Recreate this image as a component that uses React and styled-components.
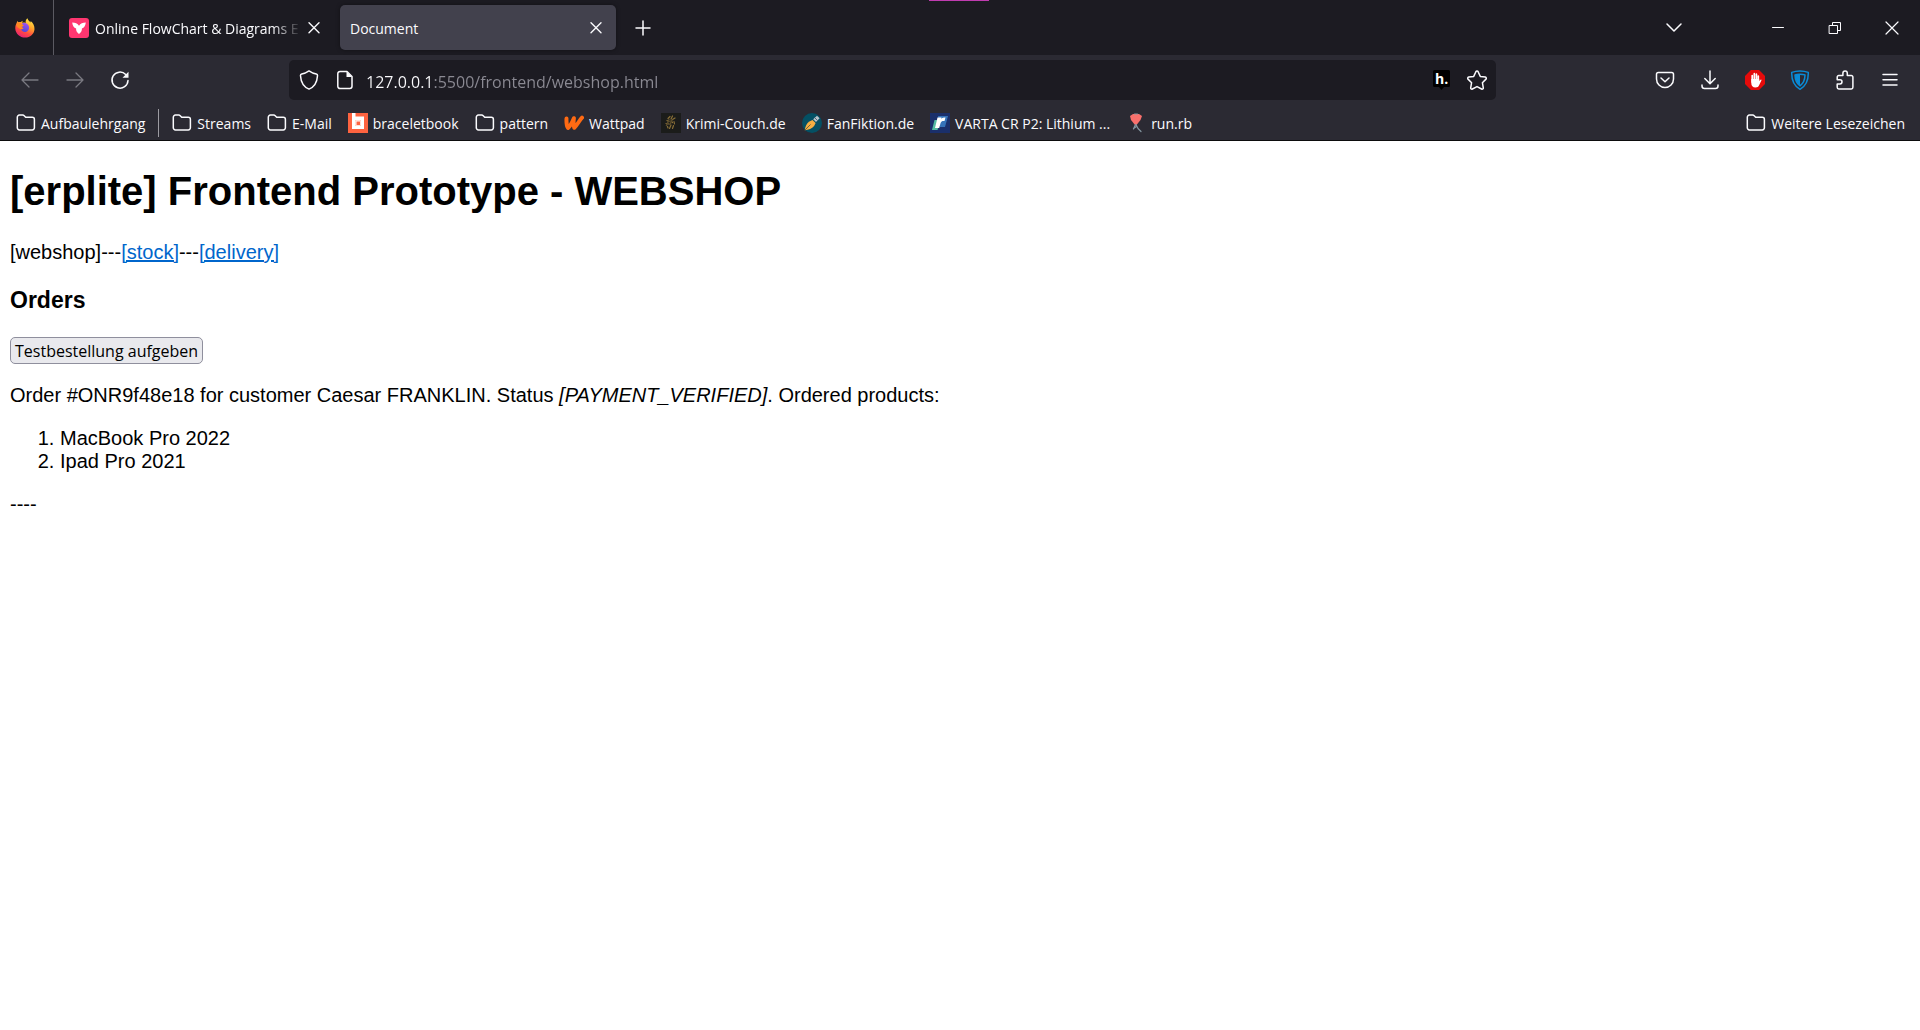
import React from "react";
import styled, { createGlobalStyle, css } from "styled-components";

const uiFont = '"Open Sans", "Noto Sans", sans-serif';
const docFont = '"Liberation Sans", Arial, sans-serif';

const GlobalStyle = createGlobalStyle`
  *, *::before, *::after { box-sizing: border-box; }
  body { margin: 0; background: #fff; }
`;

const Window = styled.div`
  display: flex;
  flex-direction: column;
  min-height: 100vh;
`;

const Chrome = styled.header`
  background: #2b2a33;
  color: #fbfbfe;
  font: 14px/20px ${uiFont};
  border-bottom: 1px solid #0c0c0d;
`;

const SnapMarker = styled.div`
  position: absolute;
  top: 0;
  left: calc(50% - 31px);
  width: 60px;
  height: 1px;
  background: #c03cb0;
`;

const TabStrip = styled.div`
  display: flex;
  align-items: center;
  height: 55px;
  background: #1c1b22;
`;

const FirefoxView = styled.button`
  display: flex;
  align-items: center;
  align-self: stretch;
  width: 54px;
  padding: 0 0 0 15px;
  margin-right: 4px;
  border: 0;
  border-right: 1px solid #5b5a62;
  background: none;
`;

const Tab = styled.div`
  display: flex;
  align-items: center;
  width: 276px;
  height: 45px;
  margin-right: 6px;
  padding: 0 8px 0 ${(p) => (p.$active ? 10 : 11)}px;
  border-radius: 5px;
  ${(p) => p.$active && css`
    background: #42414d;
    box-shadow: 0 0 4px rgba(0, 0, 0, 0.4);
  `}
`;

const TabTitle = styled.span`
  flex: 1;
  min-width: 0;
  padding-top: 2px;
  overflow: hidden;
  white-space: nowrap;
  ${(p) => p.$fade && css`
    margin-left: 6px;
    mask-image: linear-gradient(to left, transparent, #000 30px);
  `}
`;

const IconButton = styled.button`
  display: flex;
  flex: none;
  align-items: center;
  justify-content: center;
  width: ${(p) => p.$width || 45}px;
  height: 40px;
  padding: 0;
  border: 0;
  border-radius: 5px;
  background: none;
  color: ${(p) => (p.$muted ? "#7a7981" : "#fbfbfe")};
`;

const WindowControls = styled.div`
  display: flex;
  margin-left: auto;
`;

const ListTabs = styled.div`
  margin-right: 55px;
`;

const NavBar = styled.nav`
  display: flex;
  align-items: center;
  height: 49px;
  padding: 1px 8px 0 7px;
`;

const Spring = styled.div`
  flex: 0 1 ${(p) => p.$basis || 146}px;
`;

const UrlBar = styled.div`
  display: flex;
  flex: 1;
  align-items: center;
  height: 40px;
  padding: 0 2px;
  border-radius: 5px;
  background: #1c1b22;
`;

const UrlInput = styled.input`
  flex: 1;
  min-width: 0;
  height: 32px;
  margin-left: 4px;
  padding: 3px 0 0;
  border: 0;
  outline: 0;
  font: 16px/28px ${uiFont};
  color: transparent;
  caret-color: #fbfbfe;
  background: linear-gradient(to right, #fbfbfe 66px, #8b8a93 66px);
  background-clip: text;
  -webkit-background-clip: text;
`;

const Bookmarks = styled.div`
  display: flex;
  align-items: center;
  height: 36px;
  padding: 2px 7px 0 8px;
`;

const Bookmark = styled.a`
  display: flex;
  flex: none;
  align-items: center;
  gap: 5px;
  padding: 0 8px;
  color: inherit;
  text-decoration: none;
  white-space: nowrap;
  ${(p) => p.$end && css`
    margin-left: auto;
  `}
`;

const BookmarkLabel = styled.span`
  padding-top: 2px;
`;

const Separator = styled.div`
  width: 1px;
  height: 28px;
  margin: 0 5px;
  background: #9c9ba2;
`;

const Page = styled.main`
  flex: 1;
  padding: 0 10px;
  background: #fff;
  color: #000;
  font: 20px/23px ${docFont};
`;

const Title = styled.h1`
  margin: 27px 0;
  font-size: 40px;
  line-height: 46px;
`;

const Subtitle = styled.h3`
  margin: 23px 0;
  font-size: 23px;
  line-height: 27px;
`;

const Paragraph = styled.p`
  margin: 20px 0;
`;

const DocLink = styled.a`
  color: #0066cc;
`;

const OrderButton = styled.button`
  display: block;
  height: 27px;
  padding: 2px 4px 0;
  border: 1px solid #8f8f9d;
  border-radius: 5px;
  background: #e9e9ed;
  color: #000;
  font: 16px/23px ${uiFont};
`;

const Products = styled.ol`
  margin: 20px 0;
  padding-left: 50px;
`;

const Icon = styled.svg.attrs({
  width: 20,
  height: 20,
  viewBox: "0 0 20 20",
  "aria-hidden": true,
})`
  flex: none;
  fill: none;
  stroke: ${(p) => (p.$solid ? "none" : "currentColor")};
  stroke-width: ${(p) => p.$weight || 1.5};
  stroke-linecap: round;
  stroke-linejoin: ${(p) => (p.$sharp ? "miter" : "round")};
`;

const FirefoxIcon = () => (
  <Icon $solid>
    <defs>
      <linearGradient id="ff-body" x1="0.8" y1="0" x2="0.3" y2="1">
        <stop offset="0" stopColor="#fff04a" />
        <stop offset="0.4" stopColor="#ffa22b" />
        <stop offset="0.7" stopColor="#ff4a41" />
        <stop offset="1" stopColor="#e61e78" />
      </linearGradient>
      <linearGradient id="ff-globe" x1="0.7" y1="0" x2="0.3" y2="1">
        <stop offset="0" stopColor="#a450f0" />
        <stop offset="1" stopColor="#4f46d8" />
      </linearGradient>
    </defs>
    <path fill="url(#ff-body)" d="M12.4.3c.8 2.3 2.1 3 3 4.200.3-.4.3-.9.2-1.400 2.400 1.700 4.100 5 3.900 8.100-.4 4.900-4.400 8.400-9.300 8.400C4.800 19.600.5 15.700.3 10.500.2 8.500.7 6.600 1.700 5.100c0-.9.3-1.500.9-2.100.2.500.5.900.9 1.200.8-.3 1.600-.3 2.300-.1.600-.7 1.300-1.100 2.200-1.300-.5.600-.8 1.200-.8 1.900 1.400-.1 2.400-.2 3.500.2-.3-1.700.3-3.500 1.700-4.600z" />
    <path fill="url(#ff-globe)" d="M7.200 5.400c1.800-.8 4-.4 5.400.9 2.200 2.200 1.900 5.600-.6 7.100-2.500 1.400-5.700.1-6.100-2.600 1 .4 2.200.1 2.800-.7-1.100-.2-1.900-.7-2.300-1.600.7-.2 1.500-.4 2.100-1L6.800 6.600z" />
    <path fill="#ff8a22" d="M1.700 5.500c1.500-1.300 3.500-1.200 4.900.3l2 1.700c-.4.900-1.300 1-2.200 1.200.3 1.100 1 1.300 2 1.500-.8 1.100-2.400 1.300-3.600.6C2.700 9.700 1.300 8 1.700 5.500z" />
  </Icon>
);

const CreatelyIcon = () => (
  <Icon $solid>
    <rect width="20" height="20" rx="3" fill="#ff3670" />
    <path fill="#fff" d="M3.200 4.500c3 0 5.400 1 6.800 3.200 1.400-2.200 3.800-3.200 6.800-3.200-.4 3.400-1.600 5.300-3.900 6.100.2 2-.8 3.900-2.900 5.300-2.100-1.400-3.100-3.300-2.900-5.300-2.300-.8-3.500-2.700-3.900-6.100z" />
  </Icon>
);

const CloseIcon = () => (
  <Icon $weight={1.4}><path d="M5 4.700l10 10M15 4.700l-10 10" /></Icon>
);

const FolderIcon = () => (
  <Icon>
    <path d="M1.300 4.200a2.100 2.100 0 0 1 2.100-2.100h3.300c.6 0 1.100.2 1.500.6l1.500 1.600h6.600a2.100 2.100 0 0 1 2.100 2.100v8.400a2.100 2.100 0 0 1-2.100 2.100H3.400a2.100 2.100 0 0 1-2.100-2.100z" />
  </Icon>
);

const BraceletIcon = () => (
  <Icon $solid>
    <rect width="20" height="20" fill="#fe6340" />
    <path fill="#fff" d="M4 0h3.500v3.500H16V16H4z" />
    <path fill="#ffc3b4" d="M7 7h6v6H7z" />
    <path fill="#fff" d="M7.500 7.500h5v5h-5z" />
    <path fill="#fe6340" d="M8.500 8.500h3.500V12H8.500z" />
  </Icon>
);

const WattpadIcon = () => (
  <Icon>
    <path
      stroke="#ff6a13"
      strokeWidth="4"
      d="M2.500 5.500c-.2 4 .2 7.500 1.500 9.500 2.300-2 4.300-6 5.900-9.800-.5 3.500-.5 7 .4 9.600C13.300 12 15.200 7.500 18 4.700"
    />
  </Icon>
);

const KrimiIcon = () => (
  <Icon>
    <rect width="20" height="20" fill="#1b1c1a" stroke="none" />
    <g stroke="#8a7038" strokeWidth="1.200">
      <path d="M9 3.500l-2 2M11.500 3l-1.500 3M14 5l-2.500 1.500M6 7.500l2 1M10 8l1.500 1.500M13 8.500l.5 2.500M5 10.500l3 .5M10 12l-1.500 3.500M12.500 12.500l-1 3M6.500 13.500l.5 1.500" />
    </g>
    <path d="M8 6.500l-2.500 6M11 7l-2 4.500" stroke="#5a4c2c" strokeWidth="1.500" />
  </Icon>
);

const FanFiktionIcon = () => (
  <Icon $solid>
    <circle cx="10" cy="10" r="10" fill="#045064" />
    <path fill="#f5ae42" d="M2.800 17.300c.3-3.800 1.800-7.300 4.600-8.900l3.100-1.500 3.100 3.100-1.500 3.100c-2.100 2.600-5.600 3.900-9.300 4.200z" />
    <path d="M3 17l5.300-5.300" stroke="#45523f" strokeWidth="0.8" />
    <path fill="#b9c4cb" d="M11.200 6.300l3.800-3.600 2.600 2.600-3.600 3.800z" />
    <path stroke="#526978" strokeWidth="1" d="M13 5l2.500 2.500" />
  </Icon>
);

const ReicheltIcon = () => (
  <Icon $solid>
    <rect width="20" height="20" fill="#1a2f6b" />
    <path fill="#53bba4" d="M4.500 7h6L7.500 17H2z" />
    <path fill="#3572b8" d="M8 3h10l-3 11h-5z" />
    <path fill="#fff" d="M7.500 4.500h4l-.3 1.200c1.200-1 2.600-1.400 4.300-1.200l-1 3.500c-2-.3-3.400.3-3.900 2l-1.400 5H5z" />
  </Icon>
);

const RunIcon = () => (
  <Icon $solid>
    <path fill="#f8706c" d="M4 3l3-2h6l3 2-1.500 4-4 5H9L5 7z" />
    <path stroke="#8396a0" strokeWidth="1.200" d="M8.500 1h3M9.500 11.500l-2 4.500M10 11.500l2 4 3 3M7.500 15.500l3-2" />
  </Icon>
);

const bookmarks = [
  { label: "Streams", Glyph: FolderIcon },
  { label: "E-Mail", Glyph: FolderIcon },
  { label: "braceletbook", Glyph: BraceletIcon },
  { label: "pattern", Glyph: FolderIcon },
  { label: "Wattpad", Glyph: WattpadIcon },
  { label: "Krimi-Couch.de", Glyph: KrimiIcon },
  { label: "FanFiktion.de", Glyph: FanFiktionIcon },
  { label: "VARTA CR P2: Lithium ...", Glyph: ReicheltIcon },
  { label: "run.rb", Glyph: RunIcon },
];

const products = ["MacBook Pro 2022", "Ipad Pro 2021"];

function BookmarkLink({ label, Glyph, end }) {
  return (
    <Bookmark href="#" $end={end}>
      <Glyph />
      <BookmarkLabel>{label}</BookmarkLabel>
    </Bookmark>
  );
}

function Tabs() {
  return (
    <TabStrip>
      <FirefoxView aria-label="Firefox View"><FirefoxIcon /></FirefoxView>
      <Tab>
        <CreatelyIcon />
        <TabTitle $fade>Online FlowChart &amp; Diagrams E</TabTitle>
        <IconButton $width={24} aria-label="Close tab"><CloseIcon /></IconButton>
      </Tab>
      <Tab $active>
        <TabTitle>Document</TabTitle>
        <IconButton $width={24} aria-label="Close tab"><CloseIcon /></IconButton>
      </Tab>
      <IconButton $width={42} aria-label="New tab">
        <Icon><path d="M10 3v14M3 10h14" /></Icon>
      </IconButton>
      <WindowControls>
        <ListTabs>
          <IconButton $width={40} aria-label="List all tabs">
            <Icon><path d="M3 6l7 7 7-7" /></Icon>
          </IconButton>
        </ListTabs>
        <IconButton $width={57} aria-label="Minimise">
          <Icon $weight={1}><path d="M4.500 9.500h11" /></Icon>
        </IconButton>
        <IconButton $width={57} aria-label="Restore">
          <Icon $weight={1} $sharp>
            <path d="M4.500 7.500h8v8h-8zM7.500 7V4.500h8v8H13" />
          </Icon>
        </IconButton>
        <IconButton $width={57} aria-label="Close window">
          <Icon $weight={1.2}><path d="M4 4l12 12M16 4L4 16" /></Icon>
        </IconButton>
      </WindowControls>
    </TabStrip>
  );
}

function Navigation() {
  return (
    <NavBar>
      <IconButton $muted aria-label="Back">
        <Icon $weight={1.3}><path d="M18 10H2M9 3l-7 7 7 7" /></Icon>
      </IconButton>
      <IconButton $muted aria-label="Forward">
        <Icon $weight={1.3}><path d="M2 10h16M11 3l7 7-7 7" /></Icon>
      </IconButton>
      <IconButton aria-label="Reload">
        <Icon>
          <path d="M15.700 4.500A8 8 0 1 0 18 10.500" />
          <path d="M18.500 1.800v6h-6z" fill="currentColor" stroke="none" />
        </Icon>
      </IconButton>
      <Spring $basis={147} />
      <UrlBar>
        <IconButton $width={36} aria-label="Tracking protection">
          <Icon><path d="M10 .9c2.600 1.800 4.900 2.700 7.300 3.200.8.200 1.300.8 1.200 1.600-.4 6.400-3 11.100-8.500 13.400-5.500-2.300-8.100-7-8.500-13.400-.1-.8.4-1.400 1.200-1.600C5.100 3.600 7.400 2.700 10 .9z" /></Icon>
        </IconButton>
        <IconButton $width={35} aria-label="Site information">
          <Icon>
            <path d="M5 1.500h7l5 5v9.800a2.200 2.200 0 0 1-2.200 2.200H5a2.200 2.200 0 0 1-2.200-2.200V3.700A2.200 2.200 0 0 1 5 1.500z" />
            <path d="M11.500 1.500v5.500H17z" fill="currentColor" stroke="none" />
          </Icon>
        </IconButton>
        <UrlInput aria-label="Address" defaultValue="127.0.0.1:5500/frontend/webshop.html" spellCheck={false} />
        <IconButton $width={35} aria-label="Hypothesis">
          <Icon $solid>
            <path fill="#000" d="M2.500 0h14A1.500 1.500 0 0 1 18 1.500v14a1.500 1.500 0 0 1-1.500 1.500H12l-2.500 3L7 17H2.500A1.500 1.500 0 0 1 1 15.500v-14A1.500 1.500 0 0 1 2.500 0z" />
            <text x="3" y="14" fill="#fff" fontFamily={uiFont} fontWeight="700" fontSize="14">h.</text>
          </Icon>
        </IconButton>
        <IconButton $width={35} aria-label="Bookmark this page">
          <Icon><path d="M10 1c.5 0 .9.3 1.100.7l2.200 4.700 5 .7c1 .2 1.400 1.300.7 2l-3.600 3.600.9 5.100c.1 1-.8 1.700-1.700 1.200L10 16.600 5.400 19c-.9.5-1.800-.2-1.700-1.200l.9-5.100L1 9.100c-.7-.7-.3-1.800.7-2l5-.7 2.200-4.700C9.100 1.300 9.500 1 10 1z" /></Icon>
        </IconButton>
      </UrlBar>
      <Spring />
      <IconButton aria-label="Save to Pocket">
        <Icon>
          <path d="M3.300 2.500h13.400c1 0 1.800.8 1.800 1.800V9a8.500 8.500 0 0 1-17 0V4.300c0-1 .8-1.800 1.800-1.800z" />
          <path d="M6 8l4 3.800L14 8" />
        </Icon>
      </IconButton>
      <IconButton aria-label="Downloads">
        <Icon><path d="M10 1v12.500M4.800 8.500l5.200 5.200 5.200-5.200M2 15v1a2.500 2.500 0 0 0 2.500 2.500h11A2.500 2.500 0 0 0 18 16v-1" /></Icon>
      </IconButton>
      <IconButton aria-label="AdBlock">
        <Icon $solid>
          <path fill="#e50b0b" d="M5.900 0h8.200L20 5.900v8.200L14.100 20H5.900L0 14.100V5.900z" />
          <path d="M7.200 12V5.500M9.300 10V3.700M11.400 10V4.200M13.300 11V6" stroke="#fff" strokeWidth="1.700" />
          <path fill="#fff" d="M6.300 9h7.900v2l1.400-1.300c.5-.4 1.100 0 .9.6l-2.400 5c-.6 1.400-1.600 2.200-3.600 2.200-2.800 0-4.200-1.700-4.200-4.500z" />
        </Icon>
      </IconButton>
      <IconButton aria-label="Shield">
        <Icon>
          <g stroke="#0a8bd6">
            <path d="M10 .9c2.800 0 5.700.5 8.300 1.500.2 7.800-2.400 13.600-8.300 16.900C4.100 16 1.500 10.200 1.700 2.400 4.300 1.400 7.200.9 10 .9z" />
            <path d="M10 4.200c1.800 0 3.500.2 5 .7-.1 5-1.700 8.500-5 10.900-3.300-2.400-4.900-5.900-5-10.900 1.500-.5 3.200-.7 5-.7z" />
          </g>
          <path d="M10 4.200v11.600C6.700 13 5.200 9.500 5 5c1.500-.5 3-.8 5-.8z" fill="#0a8bd6" stroke="none" />
        </Icon>
      </IconButton>
      <IconButton aria-label="Extensions">
        <Icon>
          <path d="M3.800 18.900a1.600 1.600 0 0 1-1.600-1.600v-3.400h2.700a2 2 0 0 0 0-4.200H2.200V7.200a1.600 1.600 0 0 1 1.600-1.600h4.100V3.200a2.200 2.200 0 0 1 4.400 0v2.400h4a1.600 1.600 0 0 1 1.600 1.600v10.100a1.600 1.600 0 0 1-1.600 1.600z" />
        </Icon>
      </IconButton>
      <IconButton aria-label="Menu">
        <Icon><path d="M3 4.500h14M3 9.700h14M3 15h14" /></Icon>
      </IconButton>
    </NavBar>
  );
}

export default function App() {
  return (
    <Window>
      <GlobalStyle />
      <Chrome>
        <SnapMarker />
        <Tabs />
        <Navigation />
        <Bookmarks>
          <BookmarkLink label="Aufbaulehrgang" Glyph={FolderIcon} />
          <Separator />
          {bookmarks.map((item) => (
            <BookmarkLink key={item.label} {...item} />
          ))}
          <BookmarkLink label="Weitere Lesezeichen" Glyph={FolderIcon} end />
        </Bookmarks>
      </Chrome>
      <Page>
        <Title>[erplite] Frontend Prototype - WEBSHOP</Title>
        <Paragraph>
          [webshop]---<DocLink href="#">[stock]</DocLink>---<DocLink href="#">[delivery]</DocLink>
        </Paragraph>
        <Subtitle>Orders</Subtitle>
        <OrderButton>Testbestellung aufgeben</OrderButton>
        <Paragraph>
          Order #ONR9f48e18 for customer Caesar FRANKLIN. Status <em>[PAYMENT_VERIFIED]</em>. Ordered products:
        </Paragraph>
        <Products>
          {products.map((name) => <li key={name}>{name}</li>)}
        </Products>
        <Paragraph>----</Paragraph>
      </Page>
    </Window>
  );
}
